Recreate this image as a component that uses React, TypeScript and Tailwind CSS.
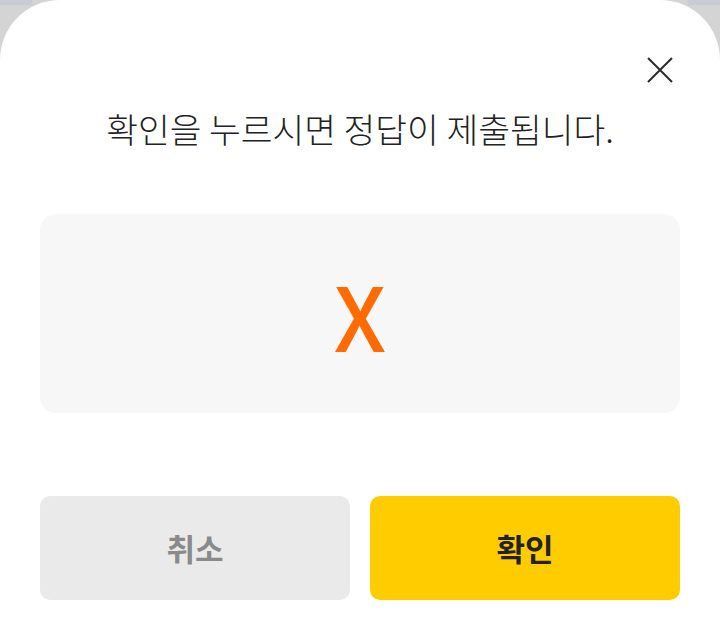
export default function App() {
  return (
    <div className="relative h-[632px] w-[720px] overflow-hidden bg-[#d4d4d4] font-['Noto_Sans_CJK_KR',sans-serif]">
      <div className="absolute left-0 top-0 h-[5px] w-[32px] bg-[#c9ccd2]" />
      <div className="absolute right-0 top-0 h-[5px] w-[32px] bg-[#c9ccd2]" />

      <section className="relative flex h-full flex-col rounded-t-[60px] bg-white px-10">
        <div className="flex justify-end pt-[57px] pr-[7px]">
          <button type="button" aria-label="닫기" className="h-[26px] w-[26px]">
            <svg viewBox="0 0 26 26" className="h-[26px] w-[26px]" fill="none" stroke="#2b2b2b" strokeWidth="2">
              <path d="M1 1L25 25M25 1L1 25" />
            </svg>
          </button>
        </div>

        <p className="mt-[25px] text-center text-[34.5px] leading-[40px] font-light text-[#222]">
          확인을 누르시면 정답이 제출됩니다.
        </p>

        <div className="mt-[66px] flex h-[199px] items-center justify-center rounded-2xl bg-[#f7f7f7]">
          <span className="text-[86px] font-normal leading-none text-[#ff6b00] [-webkit-text-stroke:2px_#ff6b00]">X</span>
        </div>

        <div className="mt-[83px] grid grid-cols-2 gap-5">
          <button type="button" className="h-[104px] rounded-[10px] bg-[#eaeaea] text-[31px] font-bold text-[#8a8a8a]">
            취소
          </button>
          <button type="button" className="h-[104px] rounded-[10px] bg-[#ffcc00] text-[31px] font-bold text-[#222]">
            확인
          </button>
        </div>
      </section>
    </div>
  )
}
